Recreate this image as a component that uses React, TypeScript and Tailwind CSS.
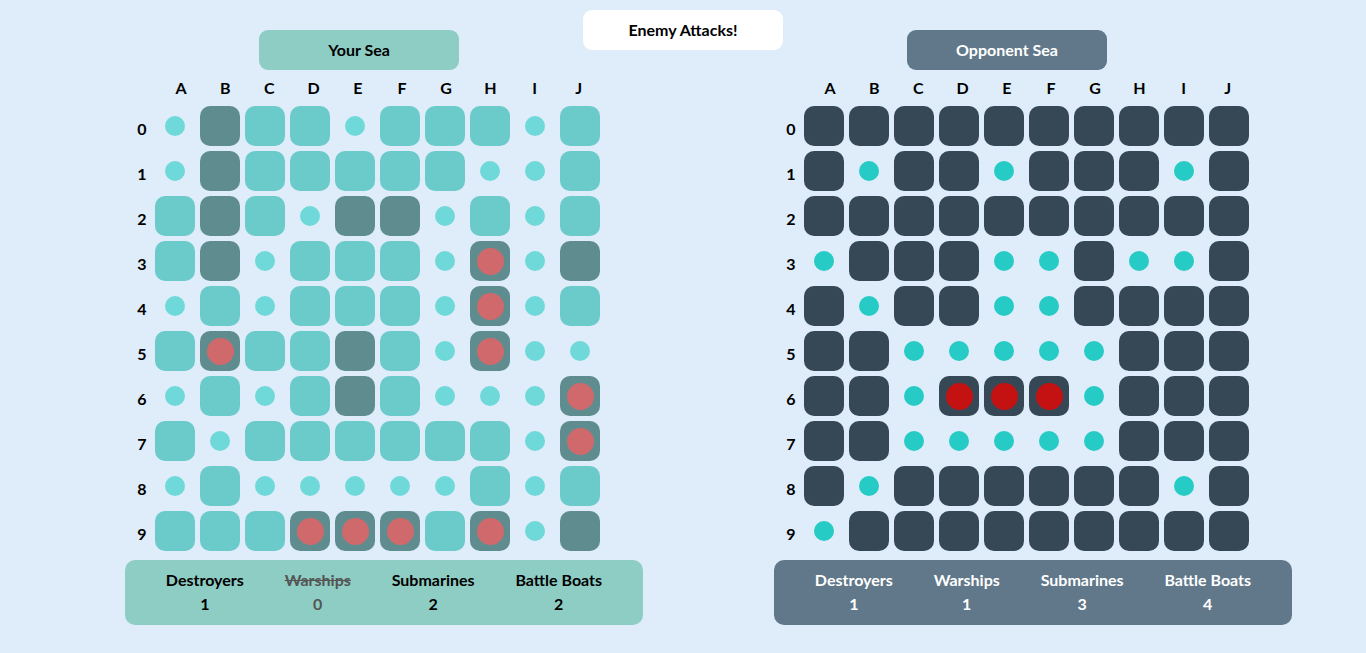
import React from 'react';

const cols = ['A', 'B', 'C', 'D', 'E', 'F', 'G', 'H', 'I', 'J'];

// L = water, S = ship, o = miss, H = ship hit
const yourSea = [
    'oSLLoLLLoL',
    'oSLLLLLooL',
    'LSLoSSoLoL',
    'LSoLLLoHoS',
    'oLoLLLoHoL',
    'LHLLSLoHoo',
    'oLoLSLoooH',
    'LoLLLLLLoH',
    'oLoooooLoL',
    'LLLHHHLHoS',
];

// X = unknown, o = miss, H = hit
const opponentSea = [
    'XXXXXXXXXX',
    'XoXXoXXXoX',
    'XXXXXXXXXX',
    'oXXXooXooX',
    'XoXXooXXXX',
    'XXoooooXXX',
    'XXoHHHoXXX',
    'XXoooooXXX',
    'XoXXXXXXoX',
    'oXXXXXXXXX',
];

type Theme = 'mine' | 'enemy';

function Cell({ kind, theme }: { kind: string; theme: Theme }) {
    if (kind === 'o') {
        return (
            <div className="w-[40px] h-[40px] flex items-center justify-center">
                <div className={`w-[20px] h-[20px] rounded-full ${theme === 'mine' ? 'bg-[#6fd9d9]' : 'bg-[#26cbc5]'}`} />
            </div>
        );
    }
    if (theme === 'mine') {
        if (kind === 'L') return <div className="w-[40px] h-[40px] rounded-[10px] bg-[#6bcaca]" />;
        return (
            <div className="w-[40px] h-[40px] rounded-[10px] bg-[#5f8d8f] flex items-center justify-center">
                {kind === 'H' && <div className="w-[27px] h-[27px] rounded-full bg-[#d0696c]" />}
            </div>
        );
    }
    return (
        <div className="w-[40px] h-[40px] rounded-[10px] bg-[#364855] flex items-center justify-center">
            {kind === 'H' && <div className="w-[27px] h-[27px] rounded-full bg-[#c41212]" />}
        </div>
    );
}

function Board({ title, grid, theme, fleet }: { title: string; grid: string[]; theme: Theme; fleet: { name: string; count: number; sunk?: boolean }[] }) {
    const mine = theme === 'mine';
    return (
        <div className="w-[518px] flex flex-col">
            <div className={`mt-[30px] ${mine ? 'ml-[134px]' : 'ml-[133px]'} w-[200px] h-[40px] rounded-[9px] flex items-center justify-center text-[16px] font-bold ${mine ? 'bg-[#8ecdc4] text-black' : 'bg-[#61788a] text-white'}`}>
                {title}
            </div>
            <div className="h-[36px] pl-[36px] flex items-center gap-[4.2px]">
                {cols.map((c) => (
                    <span key={c} className="w-[40px] text-center text-[16px] font-bold">{c}</span>
                ))}
            </div>
            <div className="flex flex-col gap-[5px]">
                {grid.map((row, r) => (
                    <div key={r} className="flex">
                        <span className="w-[30px] h-[40px] pl-[4px] pt-[5px] flex items-center justify-center text-[16px] font-bold">{r}</span>
                        <div className="flex gap-[5px]">
                            {row.split('').map((k, i) => (
                                <Cell key={i} kind={k} theme={theme} />
                            ))}
                        </div>
                    </div>
                ))}
            </div>
            <div className={`mt-[9px] h-[65px] rounded-[10px] pt-[8px] flex justify-evenly ${mine ? 'bg-[#8ecdc4] text-black' : 'bg-[#61788a] text-white'}`}>
                {fleet.map((s) => (
                    <div key={s.name} className={`flex flex-col items-center text-[16px] font-bold leading-[24px] ${s.sunk ? 'text-[#555]' : ''}`}>
                        <span className={s.sunk ? 'line-through' : ''}>{s.name}</span>
                        <span>{s.count}</span>
                    </div>
                ))}
            </div>
        </div>
    );
}

export default function App() {
    return (
        <div className="relative min-h-screen bg-[#deedf9] text-black" style={{ fontFamily: '"Trebuchet MS", Lato, "Liberation Sans", sans-serif' }}>
            <div className="absolute left-[583px] top-[10px] w-[200px] h-[40px] rounded-[9px] bg-white flex items-center justify-center text-[16px] font-bold">
                Enemy Attacks!
            </div>
            <div className="flex pl-[125px] gap-[131px]">
                <Board
                    title="Your Sea"
                    grid={yourSea}
                    theme="mine"
                    fleet={[
                        { name: 'Destroyers', count: 1 },
                        { name: 'Warships', count: 0, sunk: true },
                        { name: 'Submarines', count: 2 },
                        { name: 'Battle Boats', count: 2 },
                    ]}
                />
                <Board
                    title="Opponent Sea"
                    grid={opponentSea}
                    theme="enemy"
                    fleet={[
                        { name: 'Destroyers', count: 1 },
                        { name: 'Warships', count: 1 },
                        { name: 'Submarines', count: 3 },
                        { name: 'Battle Boats', count: 4 },
                    ]}
                />
            </div>
        </div>
    );
}
